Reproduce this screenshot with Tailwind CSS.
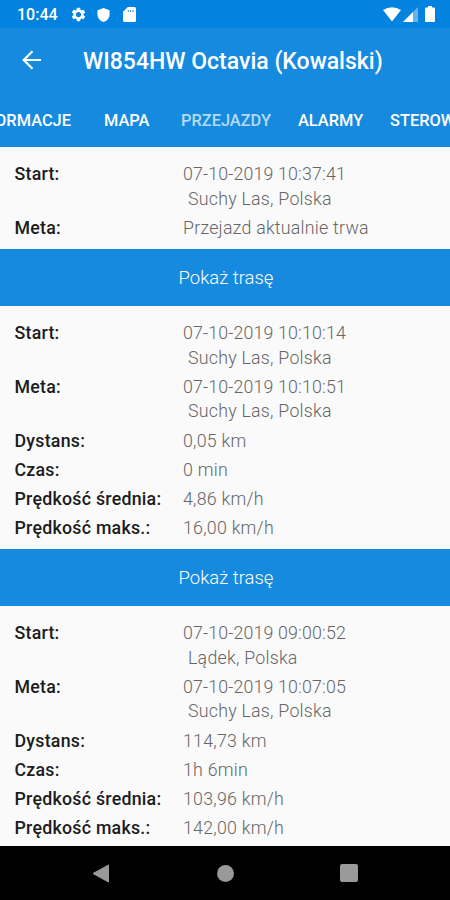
<!DOCTYPE html>
<html lang="pl">
<head>
<meta charset="utf-8">
<title>Przejazdy</title>
<script src="https://cdn.jsdelivr.net/npm/@tailwindcss/browser@4"></script>
</head>
<body class="w-[450px] h-[900px] overflow-hidden flex flex-col bg-[#fafafa] font-[Roboto,sans-serif]">
<div class="h-7 shrink-0 bg-[#0382df] flex items-center text-white pl-[17px] pr-[15px]">
  <span class="text-[16px] font-medium w-[53px] pt-[2px] whitespace-nowrap">10:44</span>
  <svg class="w-[17px] h-[17px]" viewBox="0 0 24 24" fill="currentColor"><path d="M19.14 12.94c.04-.3.06-.61.06-.94s-.02-.64-.07-.94l2.03-1.58a.5.5 0 0 0 .12-.61l-1.92-3.32a.5.5 0 0 0-.59-.22l-2.39.96a7 7 0 0 0-1.62-.94l-.36-2.54a.48.48 0 0 0-.48-.41h-3.84a.47.47 0 0 0-.47.41l-.36 2.54c-.59.24-1.13.57-1.62.94l-2.39-.96a.47.47 0 0 0-.59.22L2.74 8.87a.47.47 0 0 0 .12.61l2.03 1.58a6 6 0 0 0 0 1.88l-2.03 1.58a.5.5 0 0 0-.12.61l1.92 3.32c.12.22.37.29.59.22l2.39-.96c.5.38 1.03.7 1.62.94l.36 2.54c.05.24.24.41.48.41h3.84c.24 0 .44-.17.47-.41l.36-2.54a7 7 0 0 0 1.62-.94l2.39.96c.22.08.47 0 .59-.22l1.92-3.32a.47.47 0 0 0-.12-.61zM12 15.6a3.6 3.6 0 1 1 0-7.2 3.6 3.6 0 0 1 0 7.2z"/></svg>
  <svg class="w-[13px] h-[14px] ml-[10px] mt-[1px]" viewBox="0 0 13 15" fill="currentColor"><path d="M6.500 0 13 2.500V7c0 4-3 7-6.500 8C3 14 0 11 0 7V2.500z"/></svg>
  <svg class="w-[13px] h-[15px] ml-[13px]" viewBox="0 0 13 15" fill="currentColor" fill-rule="evenodd"><path d="M4.800 0H11.500Q13 0 13 1.500V13.500Q13 15 11.500 15H1.500Q0 15 0 13.500V4.800zM4.800 3.200v1.800h1V3.200zM7.200 3.200v1.800h1V3.200zM9.600 3.200v1.800h1V3.200z"/></svg>
  <svg class="w-[18px] h-[15px] ml-auto" viewBox="0 0 18 15" fill="currentColor"><path d="M0 3Q9-2.600 18 3L9 14.500z"/></svg>
  <svg class="w-[15px] h-[15px] ml-[2px]" viewBox="0 0 15 15" fill="currentColor"><path d="M15 0V15H0z" opacity=".4"/><path d="M10 5V15H0z"/></svg>
  <svg class="w-[10px] h-[16px] ml-[7px]" viewBox="0 0 10 16" fill="currentColor"><path d="M3 0H7V1.500H9Q10 1.500 10 2.500V15Q10 16 9 16H1Q0 16 0 15V2.500Q0 1.500 1 1.500H3z"/></svg>
</div>
<header class="h-[119px] shrink-0 bg-[#168ade] text-white flex flex-col">
  <div class="h-[66px] flex items-center pl-[22px]">
    <svg class="w-[20px] h-[20px] -mt-[3px]" viewBox="0 0 20 20" fill="none" stroke="currentColor" stroke-width="2.200"><path d="M19 10H2M10.500 1.200 1.700 10l8.800 8.800"/></svg>
    <h1 class="ml-[41px] text-[23px] leading-[30px] font-medium whitespace-nowrap pt-[1px]">WI854HW Octavia (Kowalski)</h1>
  </div>
  <nav class="h-[53px] flex items-center text-[16.4px] font-medium whitespace-nowrap pt-[1px] overflow-hidden">
    <div class="w-[71px] shrink-0 flex justify-end"><span>INFORMACJE</span></div>
    <span class="w-[77px] shrink-0 ml-[33px]">MAPA</span>
    <span class="w-[117px] shrink-0 text-white/70">PRZEJAZDY</span>
    <span class="w-[92px] shrink-0">ALARMY</span>
    <span class="shrink-0">STEROWANIE</span>
  </nav>
</header>
<main class="flex flex-col h-[699px] shrink-0 overflow-hidden text-[17.800px] leading-[24.600px] tracking-[0.24px]">
  <section class="h-[102px] shrink-0 pt-[15px] pl-[14.500px] flex flex-col gap-[4.600px]">
    <div class="flex"><b class="w-[168.500px] shrink-0 font-medium text-[#1c1c1c]">Start:</b><div class="font-light text-[#666]"><p class="tracking-[0.15px]">07-10-2019 10:37:41</p><p class="pl-[5px]">Suchy Las, Polska</p></div></div>
    <div class="flex"><b class="w-[168.500px] shrink-0 font-medium text-[#1c1c1c]">Meta:</b><p class="font-light text-[#666]">Przejazd aktualnie trwa</p></div>
  </section>
  <button class="h-[56.500px] shrink-0 bg-[#168ade] text-white font-light text-[18.500px] tracking-normal flex items-center justify-center pt-[2px] pl-[2px]">Pokaż trasę</button>
  <section class="h-[243.500px] shrink-0 pt-[15.500px] pl-[14.500px] flex flex-col gap-[4.600px]">
    <div class="flex"><b class="w-[168.500px] shrink-0 font-medium text-[#1c1c1c]">Start:</b><div class="font-light text-[#666]"><p class="tracking-[0.15px]">07-10-2019 10:10:14</p><p class="pl-[5px]">Suchy Las, Polska</p></div></div>
    <div class="flex"><b class="w-[168.500px] shrink-0 font-medium text-[#1c1c1c]">Meta:</b><div class="font-light text-[#666]"><p class="tracking-[0.15px]">07-10-2019 10:10:51</p><p class="pl-[5px]">Suchy Las, Polska</p></div></div>
    <div class="flex"><b class="w-[168.500px] shrink-0 font-medium text-[#1c1c1c]">Dystans:</b><p class="font-light text-[#666]">0,05 km</p></div>
    <div class="flex"><b class="w-[168.500px] shrink-0 font-medium text-[#1c1c1c]">Czas:</b><p class="font-light text-[#666]">0 min</p></div>
    <div class="flex"><b class="w-[168.500px] shrink-0 font-medium text-[#1c1c1c]">Prędkość średnia:</b><p class="font-light text-[#666]">4,86 km/h</p></div>
    <div class="flex"><b class="w-[168.500px] shrink-0 font-medium text-[#1c1c1c]">Prędkość maks.:</b><p class="font-light text-[#666]">16,00 km/h</p></div>
  </section>
  <button class="h-[56.500px] shrink-0 bg-[#168ade] text-white font-light text-[18.500px] tracking-normal flex items-center justify-center pt-[2px] pl-[2px]">Pokaż trasę</button>
  <section class="h-[243.500px] shrink-0 pt-[15.500px] pl-[14.500px] flex flex-col gap-[4.600px]">
    <div class="flex"><b class="w-[168.500px] shrink-0 font-medium text-[#1c1c1c]">Start:</b><div class="font-light text-[#666]"><p class="tracking-[0.15px]">07-10-2019 09:00:52</p><p class="pl-[5px]">Lądek, Polska</p></div></div>
    <div class="flex"><b class="w-[168.500px] shrink-0 font-medium text-[#1c1c1c]">Meta:</b><div class="font-light text-[#666]"><p class="tracking-[0.15px]">07-10-2019 10:07:05</p><p class="pl-[5px]">Suchy Las, Polska</p></div></div>
    <div class="flex"><b class="w-[168.500px] shrink-0 font-medium text-[#1c1c1c]">Dystans:</b><p class="font-light text-[#666]">114,73 km</p></div>
    <div class="flex"><b class="w-[168.500px] shrink-0 font-medium text-[#1c1c1c]">Czas:</b><p class="font-light text-[#666]">1h 6min</p></div>
    <div class="flex"><b class="w-[168.500px] shrink-0 font-medium text-[#1c1c1c]">Prędkość średnia:</b><p class="font-light text-[#666]">103,96 km/h</p></div>
    <div class="flex"><b class="w-[168.500px] shrink-0 font-medium text-[#1c1c1c]">Prędkość maks.:</b><p class="font-light text-[#666]">142,00 km/h</p></div>
  </section>
</main>
<footer class="h-[54px] shrink-0 bg-black flex items-center pl-[92px] text-[#999]">
  <svg class="w-[17px] h-[19px]" viewBox="0 0 17 19" fill="currentColor" stroke="currentColor" stroke-linejoin="round"><path d="M16.500 1V18L1 9.500z"/></svg>
  <div class="w-[17px] h-[17px] rounded-full bg-[#999] ml-[108px]"></div>
  <div class="w-[18px] h-[18px] rounded-[2px] bg-[#999] ml-[106px]"></div>
</footer>
</body>
</html>
